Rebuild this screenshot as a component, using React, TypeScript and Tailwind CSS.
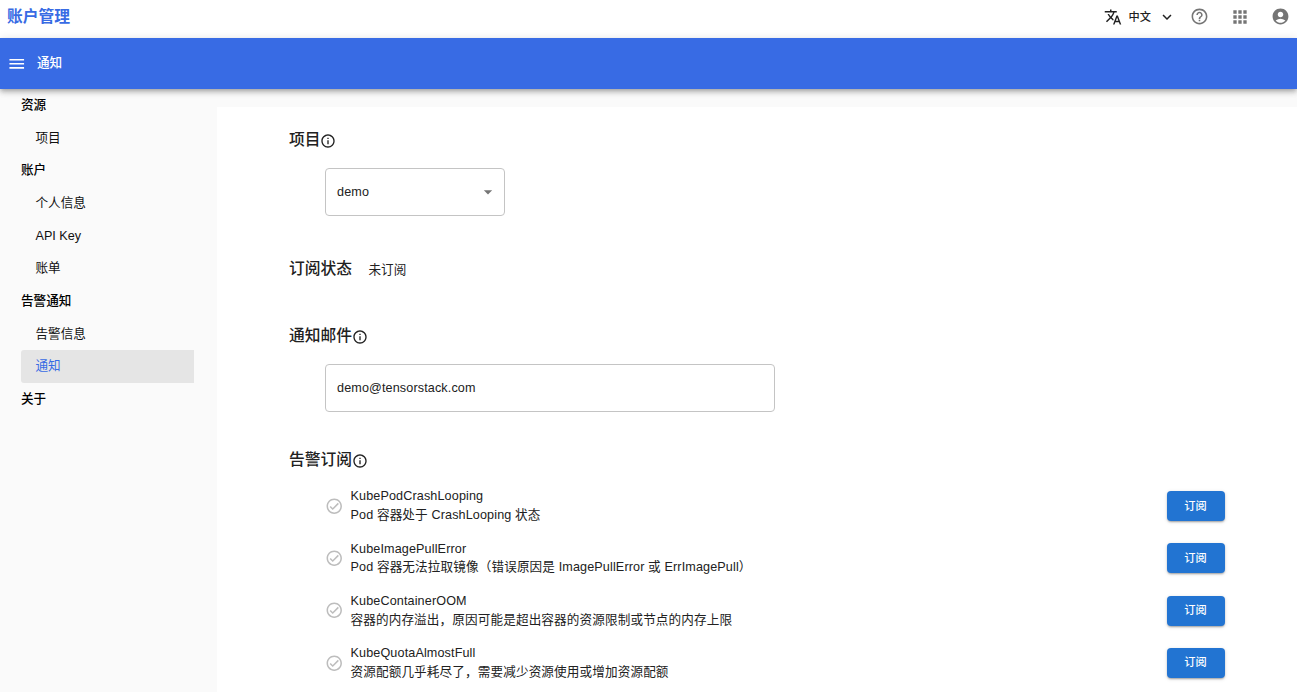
import {
  MdAccountCircle,
  MdApps,
  MdArrowDropDown,
  MdExpandMore,
  MdHelpOutline,
  MdMenu,
  MdOutlineCheckCircle,
  MdOutlineInfo,
  MdTranslate,
} from "react-icons/md";

type NavEntry = { label: string; child?: boolean; active?: boolean };

const nav: NavEntry[] = [
  { label: "资源" },
  { label: "项目", child: true },
  { label: "账户" },
  { label: "个人信息", child: true },
  { label: "API Key", child: true },
  { label: "账单", child: true },
  { label: "告警通知" },
  { label: "告警信息", child: true },
  { label: "通知", child: true, active: true },
  { label: "关于" },
];

const alerts = [
  { name: "KubePodCrashLooping", detail: "Pod 容器处于 CrashLooping 状态" },
  { name: "KubeImagePullError", detail: "Pod 容器无法拉取镜像（错误原因是 ImagePullError 或 ErrImagePull）" },
  { name: "KubeContainerOOM", detail: "容器的内存溢出，原因可能是超出容器的资源限制或节点的内存上限" },
  { name: "KubeQuotaAlmostFull", detail: "资源配额几乎耗尽了，需要减少资源使用或增加资源配额" },
];

function TopBar() {
  return (
    <div className="flex h-[38px] items-center justify-between bg-white pl-[7px] pr-[7px]">
      <h1 className="h-[38px] text-[15.75px] font-bold leading-[33px] text-[#386be4]">账户管理</h1>
      <div className="flex h-[38px] items-start pt-[8px] text-[#757575]">
        <MdTranslate className="size-[18px] text-[#212121]" />
        <span className="ml-[7px] text-[11.2px] font-medium leading-[18px] text-[#212121]">中文</span>
        <MdExpandMore className="ml-[7px] size-[18px] text-[#212121]" />
        <MdHelpOutline className="-mt-px ml-[14px] size-[19px]" />
        <MdApps className="-mt-px ml-[21px] size-[20px]" />
        <MdAccountCircle className="-mt-px ml-[21px] size-[19px]" />
      </div>
    </div>
  );
}

function Sidebar() {
  return (
    <nav className="w-[217px] shrink-0 pl-[21px] pr-[23px] text-[12.6px]">
      {nav.map((item) => (
        <div
          key={item.label + (item.child ? "-child" : "")}
          className={
            "flex h-[32.65px] items-center rounded-l-[3px] " +
            (item.child ? "pl-[14.5px] " : "font-medium text-black ") +
            (item.active ? "bg-[#e5e5e5] pb-px text-[#386be4]" : "pt-[0.4px] text-[#111111]")
          }
        >
          {item.label}
        </div>
      ))}
    </nav>
  );
}

function Heading({ text, info = true }: { text: string; info?: boolean }) {
  return (
    <h2 className="flex h-[24px] items-center text-[15.75px] font-medium tracking-normal text-[#212121]">
      {text}
      {info && <MdOutlineInfo className="-ml-[0.5px] mt-[2px] size-[16px]" />}
    </h2>
  );
}

export default function App() {
  return (
    <div
      lang="zh-CN"
      className="flex h-[692px] flex-col overflow-hidden bg-[#fafafa] font-['Liberation_Sans','Noto_Sans_CJK_SC',sans-serif] text-[#212121]"
    >
      <TopBar />
      <header className="relative flex h-[51px] shrink-0 items-center bg-[#386be4] pl-[6.5px] text-[12.6px] font-medium text-white shadow-[0_2px_4px_-1px_rgba(0,0,0,0.2),0_4px_5px_0_rgba(0,0,0,0.14),0_1px_9px_0_rgba(0,0,0,0.12)]">
        <MdMenu className="size-[19.5px]" />
        <span className="ml-[11px]">通知</span>
      </header>
      <div className="flex min-h-0 flex-1">
        <Sidebar />
        <main className="mt-[18px] flex-1 bg-white pl-[72px] pr-[72px] pt-[21px] text-[12.6px] tracking-[0.13px]">
          <Heading text="项目" />
          <div className="ml-[36px] mt-[16px] flex h-[48px] w-[180px] items-center justify-between rounded-[4px] border border-[#c4c4c4] pl-[11px] pr-[6px]">
            demo
            <MdArrowDropDown className="size-[20px] text-[#757575]" />
          </div>
          <div className="mt-[41px] flex items-center">
            <Heading text="订阅状态" info={false} />
            <span className="ml-[16.4px] mt-[2px]">未订阅</span>
          </div>
          <div className="mt-[43px]">
            <Heading text="通知邮件" />
          </div>
          <div className="ml-[36px] mt-[16px] flex h-[48px] w-[450px] items-center rounded-[4px] border border-[#c4c4c4] pl-[11px]">
            demo@tensorstack.com
          </div>
          <div className="mt-[36px]">
            <Heading text="告警订阅" />
          </div>
          <ul className="mt-[8.15px] pl-[36px]">
            {alerts.map((alert) => (
              <li key={alert.name} className="flex h-[52.2px] items-center">
                <MdOutlineCheckCircle className="size-[18.5px] text-[#bdbdbd]" />
                <div className="ml-[7px] flex-1 leading-[18.9px]">
                  <p>{alert.name}</p>
                  <p>{alert.detail}</p>
                </div>
                <button className="h-[30px] w-[58px] rounded-[4px] bg-[#2274d2] pr-px text-[11.2px] font-medium text-white shadow-[0_2px_2px_-1px_rgba(0,0,0,0.2),0_1px_2px_0_rgba(0,0,0,0.14),0_1px_4px_0_rgba(0,0,0,0.12)]">
                  订阅
                </button>
              </li>
            ))}
          </ul>
        </main>
      </div>
    </div>
  );
}
